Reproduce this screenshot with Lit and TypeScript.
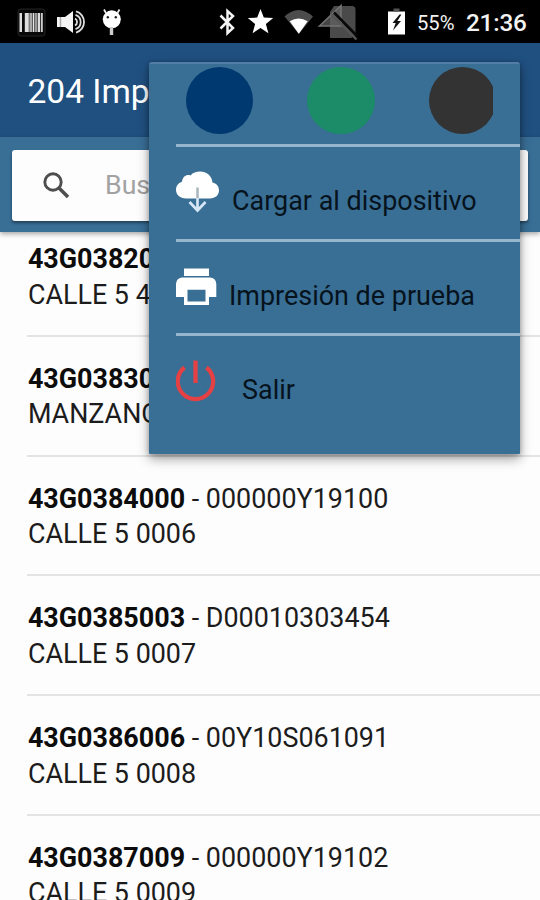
import { LitElement, html, css, svg } from "lit";
import { customElement, property } from "lit/decorators.js";

interface Meter {
  code: string;
  serial?: string;
  address: string;
}

const METERS: Meter[] = [
  { code: "43G03820", address: "CALLE 5 4" },
  { code: "43G03830", address: "MANZANO" },
  { code: "43G0384000", serial: "000000Y19100", address: "CALLE 5 0006" },
  { code: "43G0385003", serial: "D00010303454", address: "CALLE 5 0007" },
  { code: "43G0386006", serial: "00Y10S061091", address: "CALLE 5 0008" },
  { code: "43G0387009", serial: "000000Y19102", address: "CALLE 5 0009" },
];

@customElement("status-bar")
class StatusBar extends LitElement {
  static styles = css`
    :host {
      display: flex;
      height: 43px;
      background: #000;
      color: #f2f2f2;
      font-family: Roboto, sans-serif;
    }
    .icons {
      width: 410px;
      height: 43px;
      flex: none;
    }
    .level {
      width: 49px;
      margin-left: 7px;
      font-size: 20.2px;
      line-height: 46px;
      white-space: nowrap;
    }
    .clock {
      font-size: 24.3px;
      font-weight: 500;
      line-height: 46px;
      letter-spacing: -0.2px;
    }
  `;
  render() {
    return html`
      <svg class="icons" viewBox="0 0 410 43">
        <rect x="18" y="9" width="27" height="27" rx="3" fill="#080808" stroke="#242424" />
        ${[
          [19.5, 2.5, "#ddd"], [24.8, 4, "#ddd"], [29.3, 3, "#aaa"], [32.8, 1.6, "#e8e8e8"],
          [35, 2.6, "#999"], [38, 2.2, "#ddd"], [41, 1.8, "#ccc"],
        ].map(([x, w, c]) => svg`<rect x=${x} y="13" width=${w} height="19" fill=${c} />`)}
        <path d="M57 17h8l8-6v22l-8-6h-8z" fill="#f4f4f4" />
        <path d="M60.5 17v10" stroke="#aaa" stroke-width="1.5" />
        <g fill="none" stroke="#ddd" stroke-width="1.8">
          <path d="M75 18.5a4 4 0 0 1 0 7" />
          <path d="M75.5 14.8a7.6 7.6 0 0 1 0 14.4" />
          <path d="M76 11.4a11 11 0 0 1 0 21.2" />
        </g>
        <circle cx="111.8" cy="19.3" r="9" fill="#fff" />
        <path d="M106 13l-2-3.5M117.500 13l2-3.5" stroke="#eee" stroke-width="1.8" />
        <circle cx="107.800" cy="17.300" r="1.200" fill="#222" />
        <circle cx="115.800" cy="17.300" r="1.200" fill="#222" />
        <path d="M111.500 27v8" stroke="#ccc" stroke-width="3.400" />
        <path d="M220.500 15.500l12.500 12.500-5.500 5.200V11l5.500 5-12.500 12.500" fill="none" stroke="#f4f4f4" stroke-width="2.500" />
        <path d="M260.500 9l3.300 8.600 9.400.4-7.300 5.900 2.500 9.300-7.900-5.200-7.900 5.200 2.500-9.300-7.300-5.900 9.400-.4z" fill="#fff" />
        <path d="M284.500 16.500q14-13 28.500 0L298.800 34z" fill="#4c4c4c" />
        <path d="M289.700 21.300q9-5.500 18 0L298.800 33.800z" fill="#fff" />
        <path d="M334 6h18a3.500 3.500 0 0 1 3.500 3.500V35l-4 3H330V12z" fill="#4a4a4a" />
        <path d="M319.500 26L341 5.500V26z" fill="#636363" fill-opacity=".7" stroke="#737373" stroke-width="1.600" />
        <path d="M334 12.500l23 23.500" stroke="#080808" stroke-width="2.600" />
        <path d="M331.500 14.500l25 25" stroke="#555" stroke-width="2.400" />
        <path d="M388 11.500h17v23h-17z" fill="#fff" />
        <path d="M393.500 8.500h6v3h-6z" fill="#555" />
        <path d="M399.500 14.500l-7 8.500h3.200l-2.700 7.500 8-9.500h-3.600l4-6.500z" fill="#111" />
      </svg>
      <span class="level">55%</span>
      <span class="clock">21:36</span>
    `;
  }
}

@customElement("meter-row")
class MeterRow extends LitElement {
  @property({ attribute: false }) meter!: Meter;
  static styles = css`
    :host {
      display: block;
      box-sizing: border-box;
      height: 119.75px;
      margin-left: 27px;
      padding: 24px 0 0 0.9px;
      border-bottom: 2px solid #e4e4e4;
      color: #1c1c1c;
      font: 400 26.9px/36px Roboto, sans-serif;
      white-space: nowrap;
    }
    .line {
      height: 35.5px;
    }
    .code {
      font-weight: 700;
      color: #0c0c0c;
    }
  `;
  render() {
    const { code, serial, address } = this.meter;
    return html`
      <div class="line"><span class="code">${code}</span>${serial ? ` - ${serial}` : ""}</div>
      <div class="line">${address}</div>
    `;
  }
}

@customElement("options-menu")
class OptionsMenu extends LitElement {
  static styles = css`
    :host {
      display: block;
      box-sizing: border-box;
      background: #396e95;
      border-top: 2px solid #527ea5;
      border-radius: 3px 3px 1px 1px;
      box-shadow: 0 5px 12px rgba(0, 0, 0, 0.36), 0 1px 5px rgba(0, 0, 0, 0.25);
      color: #06131c;
      font: 400 26.95px/34px Roboto, sans-serif;
    }
    .swatches {
      display: flex;
      gap: 54px;
      height: 80px;
      margin-left: 36.5px;
      width: 307.5px;
      overflow: hidden;
      padding-top: 2.5px;
      box-sizing: border-box;
    }
    .swatch {
      width: 67.5px;
      height: 67.5px;
      border-radius: 50%;
      flex: none;
    }
    .navy { background: #003970; }
    .green { background: #1b8c67; }
    .dark { background: #333; }
    .item {
      display: flex;
      box-sizing: border-box;
      height: 94.6px;
      margin-left: 26.5px;
      white-space: nowrap;
      border-top: 3px solid #94b5cb;
    }
    .item svg {
      width: 44px;
      height: 50px;
      flex: none;
      margin-top: 22px;
    }
    .label {
      margin-top: 37.3px;
    }
    .upload { margin-left: 12.5px; }
    .print { margin-left: 9.5px; }
    .exit { margin-left: 22.5px; }
  `;
  render() {
    return html`
      <div class="swatches">
        <div class="swatch navy"></div>
        <div class="swatch green"></div>
        <div class="swatch dark"></div>
      </div>
      <div class="item">
        <svg viewBox="0 0 44 50">
          <path d="M10 29.500C4 29.500 0 25.800 0 20.800c0-4.500 3-7.300 6-8.100C6.500 8 10.500 5 14.500 6.500 17 3.500 20 2.500 24 2.500c6.800 0 12 4.500 12.500 11 4 .8 6.500 4 6.500 7.800 0 4.800-3.500 8.200-9 8.200z" fill="#fff" />
          <path d="M21.500 18.500v11" stroke="#a9b5bd" stroke-width="2.500" />
          <path d="M21.500 29v12M13.500 33l8 8.500 8-8.500" fill="none" stroke="#d5e7f4" stroke-width="2.700" />
        </svg>
        <span class="label upload">Cargar al dispositivo</span>
      </div>
      <div class="item">
        <svg viewBox="0 0 44 50">
          <path d="M8 4.500h25v7.500H8z" fill="#fff" />
          <path d="M6.500 13.500h27.500a6.300 6.300 0 0 1 6.300 6.300V33H33v8H8v-8H0V19.800a6.300 6.300 0 0 1 6.500-6.300zM11.500 25.800V37.500h18V25.800z" fill="#fff" fill-rule="evenodd" />
        </svg>
        <span class="label print">Impresión de prueba</span>
      </div>
      <div class="item">
        <svg viewBox="0 0 44 50">
          <path d="M8.500 9.500A17.700 17.700 0 1 0 30.400 9.500" fill="none" stroke="#e54144" stroke-width="4.200" />
          <path d="M19.500 2.500v22.500" stroke="#e54144" stroke-width="4.300" />
        </svg>
        <span class="label exit">Salir</span>
      </div>
    `;
  }
}

@customElement("app-root")
class AppRoot extends LitElement {
  static styles = css`
    :host {
      display: block;
      position: relative;
      width: 540px;
      height: 900px;
      overflow: hidden;
      background: #fdfdfd;
      font-family: Roboto, sans-serif;
    }
    .toolbar {
      height: 94px;
      box-sizing: border-box;
      padding: 29px 0 0 27.5px;
      background: #205080;
      color: #fff;
      font-size: 33.5px;
      line-height: 40px;
      white-space: nowrap;
      overflow: hidden;
    }
    .searchbar {
      position: relative;
      box-sizing: border-box;
      height: 95px;
      padding: 12.5px 12px 0;
      background: #396e95;
      box-shadow: 0 2px 5px rgba(0, 0, 0, 0.35);
    }
    .field {
      display: flex;
      align-items: center;
      box-sizing: border-box;
      height: 71px;
      border-radius: 3px;
      background: #fdfdfd;
      box-shadow: 0 2px 3px rgba(0, 0, 0, 0.4);
      color: #a2a2a2;
      font-size: 26.7px;
    }
    .field svg {
      width: 27px;
      height: 27px;
      margin: 0 35px 0 31px;
    }
    .list {
      margin-top: -15px;
    }
    .menu {
      position: absolute;
      left: 149px;
      top: 62px;
      width: 371px;
      height: 392px;
    }
  `;
  render() {
    return html`
      <status-bar></status-bar>
      <div class="toolbar">204 Imp</div>
      <div class="searchbar">
        <div class="field">
          <svg viewBox="0 0 27 27" fill="none" stroke="#4e4e4e">
            <circle cx="10" cy="10" r="8.200" stroke-width="2.900" />
            <path d="M16 16l9 9" stroke-width="3.500" />
          </svg>
          <span>Bus</span>
        </div>
      </div>
      <div class="list">
        ${METERS.map((m) => html`<meter-row .meter=${m}></meter-row>`)}
      </div>
      <options-menu class="menu"></options-menu>
    `;
  }
}
